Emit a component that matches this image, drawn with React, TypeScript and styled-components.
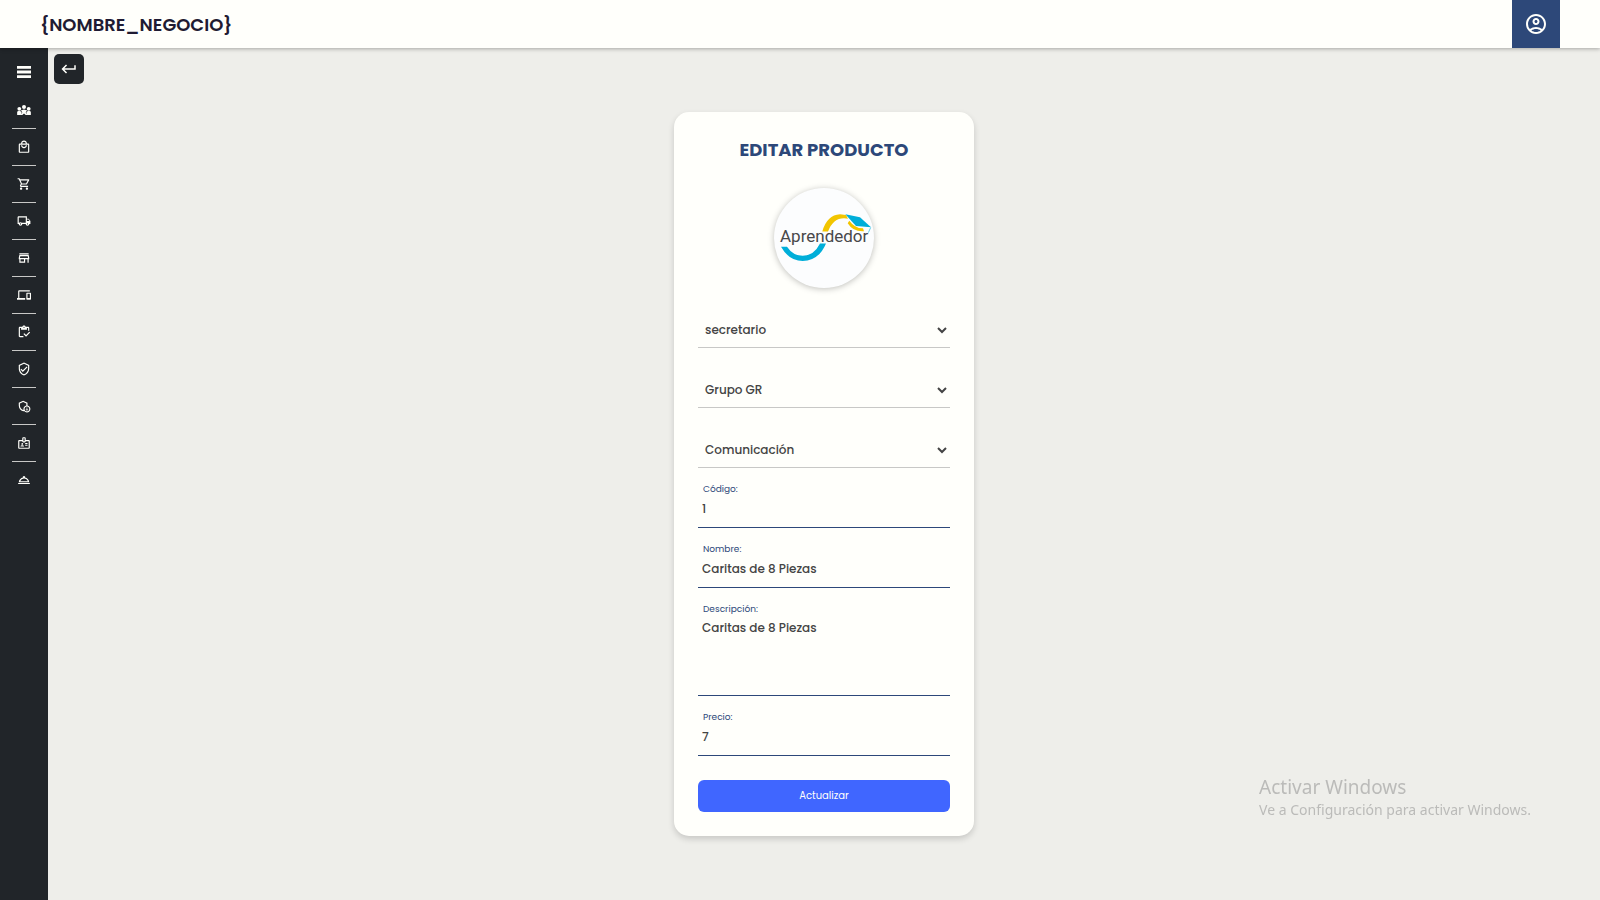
import React from 'react';
import styled, { createGlobalStyle, css } from 'styled-components';
import {
  MdKeyboardReturn,
  MdOutlineAccountCircle,
  MdOutlineAdminPanelSettings,
  MdOutlineBadge,
  MdOutlineDevices,
  MdOutlineInventory,
  MdOutlineLocalMall,
  MdOutlineLocalShipping,
  MdOutlineRoomService,
  MdOutlineShoppingCart,
  MdOutlineStore,
  MdOutlineVerifiedUser,
} from 'react-icons/md';

const color = {
  surface: '#fffffb',
  page: '#eeeeea',
  dark: '#212529',
  navy: '#2d4879',
  ink: '#1f1b33',
  text: '#444444',
  line: '#c8c8c6',
  primary: '#4066ff',
};

const GlobalStyle = createGlobalStyle`
  *, *::before, *::after { box-sizing: border-box; }
  body {
    margin: 0;
    background: ${color.page};
    color: ${color.text};
    font-family: Poppins, Inter, 'Open Sans', sans-serif;
    font-size: 12px;
  }
  button, input, select, textarea { font: inherit; color: inherit; }
`;

const Page = styled.div`
  display: flex;
  flex-direction: column;
  min-height: 100vh;
`;

const Header = styled.header`
  display: flex;
  align-items: center;
  justify-content: space-between;
  height: 48px;
  padding: 0 40px;
  background: ${color.surface};
  box-shadow: 0 1px 4px rgba(0, 0, 0, 0.3);
  z-index: 1;
`;

const Brand = styled.span`
  color: ${color.ink};
  font-size: 18px;
  font-weight: 600;
`;

const AccountButton = styled.button`
  display: grid;
  place-items: center;
  width: 48px;
  height: 48px;
  padding: 0;
  border: 0;
  background: ${color.navy};
  color: ${color.surface};
  cursor: pointer;
`;

const Body = styled.div`
  display: flex;
  flex: 1;
`;

const Sidebar = styled.nav`
  display: flex;
  flex-direction: column;
  align-items: center;
  width: 48px;
  flex: none;
  background: ${color.dark};
  color: ${color.surface};
`;

const MenuButton = styled.button`
  display: grid;
  place-items: center;
  width: 48px;
  height: 44px;
  padding: 4px 0 0;
  border: 0;
  background: none;
  color: inherit;
  cursor: pointer;
`;

const NavList = styled.ul`
  width: 24px;
  margin: 0;
  padding: 0;
  list-style: none;
`;

const NavItem = styled.li`
  height: 37px;
  & + & { border-top: 1px solid ${color.line}; }
  &:first-child { height: 36px; }
`;

const NavLink = styled.a`
  display: grid;
  place-items: center;
  height: 36px;
  color: inherit;
`;

const Main = styled.main`
  display: grid;
  grid-template-columns: 30px 1fr 30px;
  flex: 1;
  padding: 6px;
`;

const BackButton = styled.button`
  display: grid;
  place-items: center;
  width: 30px;
  height: 30px;
  padding: 0;
  border: 0;
  border-radius: 5px;
  background: ${color.dark};
  color: ${color.surface};
  cursor: pointer;
`;

const Card = styled.form`
  display: flex;
  flex-direction: column;
  place-self: center;
  width: 300px;
  padding: 24px;
  border-radius: 15px;
  background: ${color.surface};
  box-shadow: 0 3px 6px rgba(0, 0, 0, 0.16);
`;

const Title = styled.h1`
  margin: 0 0 24px;
  color: ${color.navy};
  font-size: 18px;
  line-height: 28px;
  font-weight: 700;
  text-align: center;
`;

const Avatar = styled.div`
  align-self: center;
  width: 100px;
  height: 100px;
  border-radius: 50%;
  overflow: hidden;
  background: #fcfdfe;
  box-shadow: 0 1px 6px rgba(0, 0, 0, 0.25);
`;

const Field = styled.div`
  display: flex;
  flex-direction: column;
  padding-top: 15px;
`;

const SelectField = styled.div`
  padding-top: 24px;
`;

const Select = styled.select`
  display: block;
  width: 100%;
  height: 36px;
  padding: 0 1px 0 3px;
  border: 0;
  border-bottom: 1px solid ${color.line};
  border-radius: 0;
  background: transparent;
  font-weight: 500;
`;

const Label = styled.label`
  padding-left: 5px;
  color: ${color.navy};
  font-size: 9px;
  line-height: 12px;
`;

const control = css`
  width: 100%;
  border: 0;
  border-bottom: 1px solid ${color.navy};
  border-radius: 0;
  background: transparent;
  font-weight: 500;
  line-height: 18px;
  outline: 0;
`;

const Input = styled.input`
  ${control}
  height: 33px;
  padding: 4px 4px 9px;
`;

const TextArea = styled.textarea`
  ${control}
  display: block;
  height: 81px;
  padding: 4px;
  resize: none;
`;

const Submit = styled.button`
  height: 32px;
  margin-top: 24px;
  border: 0;
  border-radius: 6px;
  background: ${color.primary};
  color: ${color.surface};
  font-size: 10px;
  cursor: pointer;
`;

const Watermark = styled.aside`
  position: fixed;
  right: 69px;
  bottom: 80px;
  color: #bbbbb9;
  font-family: 'Segoe UI', 'Noto Sans', sans-serif;
  font-size: 14px;
  line-height: 20px;
  pointer-events: none;
`;

const WatermarkTitle = styled.div`
  font-size: 19px;
  line-height: 25px;
`;

const MenuIcon = () => (
  <svg width="14" height="12" viewBox="0 0 14 12" fill="currentColor" aria-hidden="true">
    <path d="M0 0h14v2.800H0zM0 4.600h14v2.800H0zM0 9.200h14V12H0z" />
  </svg>
);

const PeopleIcon = () => (
  <svg width="14" height="14" viewBox="0 0 28 28" fill="currentColor" aria-hidden="true">
    <circle cx="14" cy="8" r="4" />
    <circle cx="4.6" cy="11.6" r="3.8" />
    <circle cx="23.4" cy="11.6" r="3.8" />
    <path d="M7.500 15 14 12.800l6.500 2.200-3.200 3.600 3.700 5.400h-3.500L14 21l-3.500 3H7l3.700-5.400z" />
    <path d="M.3 24v-5.600Q.5 16 3 16h3.600l2.800 3L7.600 24zM27.700 24v-5.600Q27.500 16 25 16h-3.600l-2.800 3 1.800 5z" />
  </svg>
);

const AprendedorLogo = () => (
  <svg width="100" height="100" viewBox="0 0 100 100" role="img" aria-label="Aprendedor">
    <path
      d="M7 58.700Q15 73 28.700 73 45 72.500 52 55.500H46Q40 67.700 28.700 67.700 19 67.700 13 58.700z"
      fill="#00aed9"
    />
    <path d="M48.300 43.500Q53 27 66 26.300L72 27 74 30.700Q60 28 54 43.500z" fill="#f2c500" />
    <path d="M75.300 32.700Q81 40.500 89 40.300L90 43.300Q79 44 73.700 35.300z" fill="#f2c500" />
    <path d="M71.300 26.300 86 29.300 97 39.300 82 38z" fill="#00aed9" />
    <path d="M96.700 39.500 94.300 44.700" stroke="#00aed9" strokeWidth="0.6" />
    <text x="6" y="54" fontFamily="Roboto, sans-serif" fontSize="17" fill="#48484a">
      Aprendedor
    </text>
  </svg>
);

const sections = [
  { name: 'Usuarios', Icon: PeopleIcon },
  { name: 'Productos', Icon: MdOutlineLocalMall },
  { name: 'Ventas', Icon: MdOutlineShoppingCart },
  { name: 'Envíos', Icon: MdOutlineLocalShipping },
  { name: 'Tiendas', Icon: MdOutlineStore },
  { name: 'Dispositivos', Icon: MdOutlineDevices },
  { name: 'Inventario', Icon: MdOutlineInventory },
  { name: 'Permisos', Icon: MdOutlineVerifiedUser },
  { name: 'Administración', Icon: MdOutlineAdminPanelSettings },
  { name: 'Credenciales', Icon: MdOutlineBadge },
  { name: 'Servicios', Icon: MdOutlineRoomService },
];

const selects = [
  { id: 'rol', name: 'Rol', value: 'secretario' },
  { id: 'grupo', name: 'Grupo', value: 'Grupo GR' },
  { id: 'area', name: 'Área', value: 'Comunicación' },
];

export default function App() {
  return (
    <Page>
      <GlobalStyle />
      <Header>
        <Brand>{'{NOMBRE_NEGOCIO}'}</Brand>
        <AccountButton type="button" aria-label="Cuenta">
          <MdOutlineAccountCircle size={24} />
        </AccountButton>
      </Header>
      <Body>
        <Sidebar>
          <MenuButton type="button" aria-label="Menú">
            <MenuIcon />
          </MenuButton>
          <NavList>
            {sections.map(({ name, Icon }) => (
              <NavItem key={name}>
                <NavLink href="#" aria-label={name}>
                  <Icon size={14} />
                </NavLink>
              </NavItem>
            ))}
          </NavList>
        </Sidebar>
        <Main>
          <BackButton type="button" aria-label="Volver">
            <MdKeyboardReturn size={18} />
          </BackButton>
          <Card onSubmit={(e) => e.preventDefault()}>
            <Title>EDITAR PRODUCTO</Title>
            <Avatar>
              <AprendedorLogo />
            </Avatar>
            {selects.map(({ id, name, value }) => (
              <SelectField key={id}>
                <Select id={id} aria-label={name} defaultValue={value}>
                  <option>{value}</option>
                </Select>
              </SelectField>
            ))}
            <Field>
              <Label htmlFor="codigo">Código:</Label>
              <Input id="codigo" defaultValue="1" />
            </Field>
            <Field>
              <Label htmlFor="nombre">Nombre:</Label>
              <Input id="nombre" defaultValue="Caritas de 8 Piezas" />
            </Field>
            <Field>
              <Label htmlFor="descripcion">Descripción:</Label>
              <TextArea id="descripcion" defaultValue="Caritas de 8 Piezas" />
            </Field>
            <Field>
              <Label htmlFor="precio">Precio:</Label>
              <Input id="precio" defaultValue="7" />
            </Field>
            <Submit type="submit">Actualizar</Submit>
          </Card>
        </Main>
      </Body>
      <Watermark>
        <WatermarkTitle>Activar Windows</WatermarkTitle>
        Ve a Configuración para activar Windows.
      </Watermark>
    </Page>
  );
}
